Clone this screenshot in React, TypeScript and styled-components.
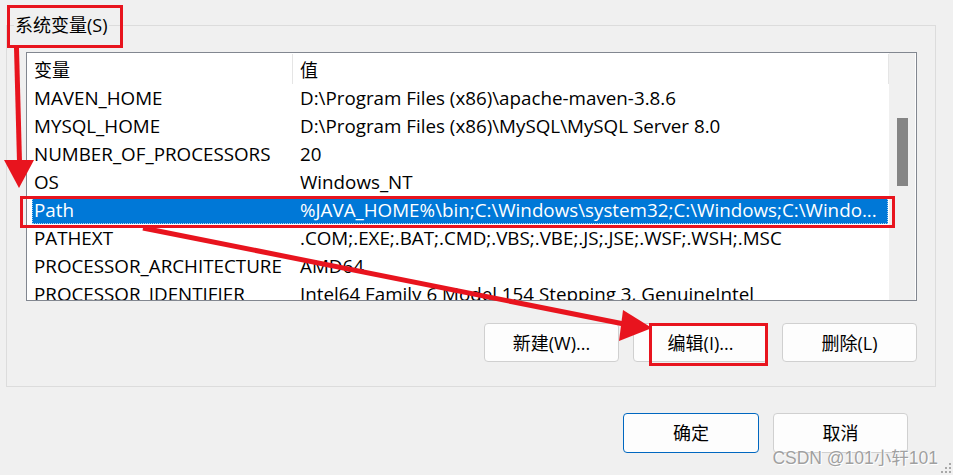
import React from "react";
import styled, { createGlobalStyle } from "styled-components";

const GlobalStyle = createGlobalStyle`
  html, body { margin: 0; padding: 0; background: #f0f0f0; }
  #root { width: 953px; height: 475px; }
  * { box-sizing: border-box; }
`;

const UI_FONT = `"Open Sans", "Noto Sans CJK SC", sans-serif`;
const RED = "#e8141e";

const Window = styled.div`
  position: relative;
  width: 953px;
  height: 475px;
  overflow: hidden;
  background: #f0f0f0;
  display: flex;
  flex-direction: column;
  font-family: ${UI_FONT};
  color: #000;
`;

const GroupBox = styled.fieldset`
  margin: 13px 0 0 6px;
  width: 930px;
  min-inline-size: auto;
  border: 1px solid #dcdcdc;
  padding: 0 18px 24px 9px;
`;

const Legend = styled.legend`
  padding: 0 1px;
  margin-left: -2px;
  font-size: 18px;
  line-height: 24px;
  height: 24px;
`;

const ListView = styled.div`
  margin: 15px 0 0 10px;
  height: 249px;
  border: 1px solid #828790;
  background: #fff;
  display: grid;
  grid-template-columns: 1fr 26px;
  padding-right: 1px;
  overflow: hidden;
`;

const Table = styled.div`
  display: flex;
  flex-direction: column;
  overflow: hidden;
  font-size: 18.8px;
`;

const HeaderRow = styled.div`
  display: grid;
  grid-template-columns: 266px 1fr;
  height: 31px;
  padding-top: 1px;
  flex: none;
`;

const HeaderCell = styled.div`
  border-right: 1px solid #e5e5e5;
  padding: 2px 0 0 7px;
  line-height: 28px;
  font-size: 18px;
`;

const DataRow = styled.div<{ $selected?: boolean }>`
  display: grid;
  grid-template-columns: 261px 1fr;
  height: 28px;
  flex: none;
  margin: 0 1px 0 5px;
  line-height: 28px;
  white-space: nowrap;
  background: ${(p) => (p.$selected ? "#0078d7" : "transparent")};
  color: ${(p) => (p.$selected ? "#fff" : "#000")};
  outline: ${(p) => (p.$selected ? "1px dotted #a8d0f2" : "none")};
  outline-offset: -1px;
`;

const NameCell = styled.div`
  padding-left: 2px;
  overflow: hidden;
`;

const ValueCell = styled.div`
  padding-left: 7px;
  overflow: hidden;
`;

const ScrollTrack = styled.div`
  background: #f0f0f0;
  padding: 65px 0 0 8px;
`;

const ScrollThumb = styled.div`
  width: 11px;
  height: 68px;
  background: #858585;
`;

const ActionRow = styled.div<{ $top: number; $right?: number }>`
  display: flex;
  justify-content: flex-end;
  gap: 14px;
  margin-top: ${(p) => p.$top}px;
  padding-right: ${(p) => p.$right ?? 0}px;
`;

const Button = styled.button<{ $primary?: boolean; $w?: number; $h?: number }>`
  width: ${(p) => p.$w ?? 135}px;
  height: ${(p) => p.$h ?? 39}px;
  background: #fdfdfd;
  border: 1px solid ${(p) => (p.$primary ? "#0067c0" : "#d0d0d0")};
  border-radius: 4px;
  font-family: ${UI_FONT};
  font-size: 18px;
  color: #000;
  padding: 0;
  line-height: 1;
`;

const Watermark = styled.div`
  position: absolute;
  right: 15px;
  bottom: 6px;
  font-family: "Liberation Sans", "Noto Sans CJK SC", sans-serif;
  font-size: 17.5px;
  color: #a0a0a0;
  text-shadow: 0 0 1px #fff, 1px 1px 0 #fff;
  pointer-events: none;
`;

const Overlay = styled.svg`
  position: absolute;
  left: 0;
  top: 0;
  pointer-events: none;
`;

const rows: { name: string; value: string; selected?: boolean }[] = [
  { name: "MAVEN_HOME", value: "D:\\Program Files (x86)\\apache-maven-3.8.6" },
  { name: "MYSQL_HOME", value: "D:\\Program Files (x86)\\MySQL\\MySQL Server 8.0" },
  { name: "NUMBER_OF_PROCESSORS", value: "20" },
  { name: "OS", value: "Windows_NT" },
  {
    name: "Path",
    value: "%JAVA_HOME%\\bin;C:\\Windows\\system32;C:\\Windows;C:\\Windo...",
    selected: true,
  },
  { name: "PATHEXT", value: ".COM;.EXE;.BAT;.CMD;.VBS;.VBE;.JS;.JSE;.WSF;.WSH;.MSC" },
  { name: "PROCESSOR_ARCHITECTURE", value: "AMD64" },
  { name: "PROCESSOR_IDENTIFIER", value: "Intel64 Family 6 Model 154 Stepping 3, GenuineIntel" },
];

const Annotations = () => (
  <Overlay width={953} height={475} viewBox="0 0 953 475">
    <g fill="none" stroke={RED} strokeWidth={3}>
      <rect x={8.5} y={6.5} width={113} height={40} />
      <rect x={21.5} y={197.5} width={872} height={29} />
      <rect x={650.5} y={324.5} width={116} height={40} />
    </g>
    <g stroke={RED} strokeWidth={5} fill="none">
      <line x1={16.5} y1={48} x2={19.5} y2={162} />
      <line x1={143} y1={228} x2={624} y2={324} />
    </g>
    <g fill={RED}>
      <polygon points="4,160 34,160 19,188" />
      <polygon points="623,310 619,341 652,328" />
    </g>
    <g fill="#a8a8a8">
      <rect x={949} y={463} width={2} height={2} />
      <rect x={945} y={467} width={2} height={2} />
      <rect x={949} y={467} width={2} height={2} />
      <rect x={941} y={471} width={2} height={2} />
      <rect x={945} y={471} width={2} height={2} />
      <rect x={949} y={471} width={2} height={2} />
    </g>
  </Overlay>
);

export default function App() {
  return (
    <Window>
      <GlobalStyle />
      <GroupBox>
        <Legend>系统变量(S)</Legend>
        <ListView>
          <Table>
            <HeaderRow>
              <HeaderCell>变量</HeaderCell>
              <HeaderCell>值</HeaderCell>
            </HeaderRow>
            {rows.map((r) => (
              <DataRow key={r.name} $selected={r.selected}>
                <NameCell>{r.name}</NameCell>
                <ValueCell>{r.value}</ValueCell>
              </DataRow>
            ))}
          </Table>
          <ScrollTrack>
            <ScrollThumb />
          </ScrollTrack>
        </ListView>
        <ActionRow $top={22}>
          <Button>新建(W)...</Button>
          <Button>编辑(I)...</Button>
          <Button>删除(L)</Button>
        </ActionRow>
      </GroupBox>
      <ActionRow $top={26} $right={45}>
        <Button $primary $w={136} $h={40}>确定</Button>
        <Button $h={40}>取消</Button>
      </ActionRow>
      <Watermark>CSDN @101小轩101</Watermark>
      <Annotations />
    </Window>
  );
}
